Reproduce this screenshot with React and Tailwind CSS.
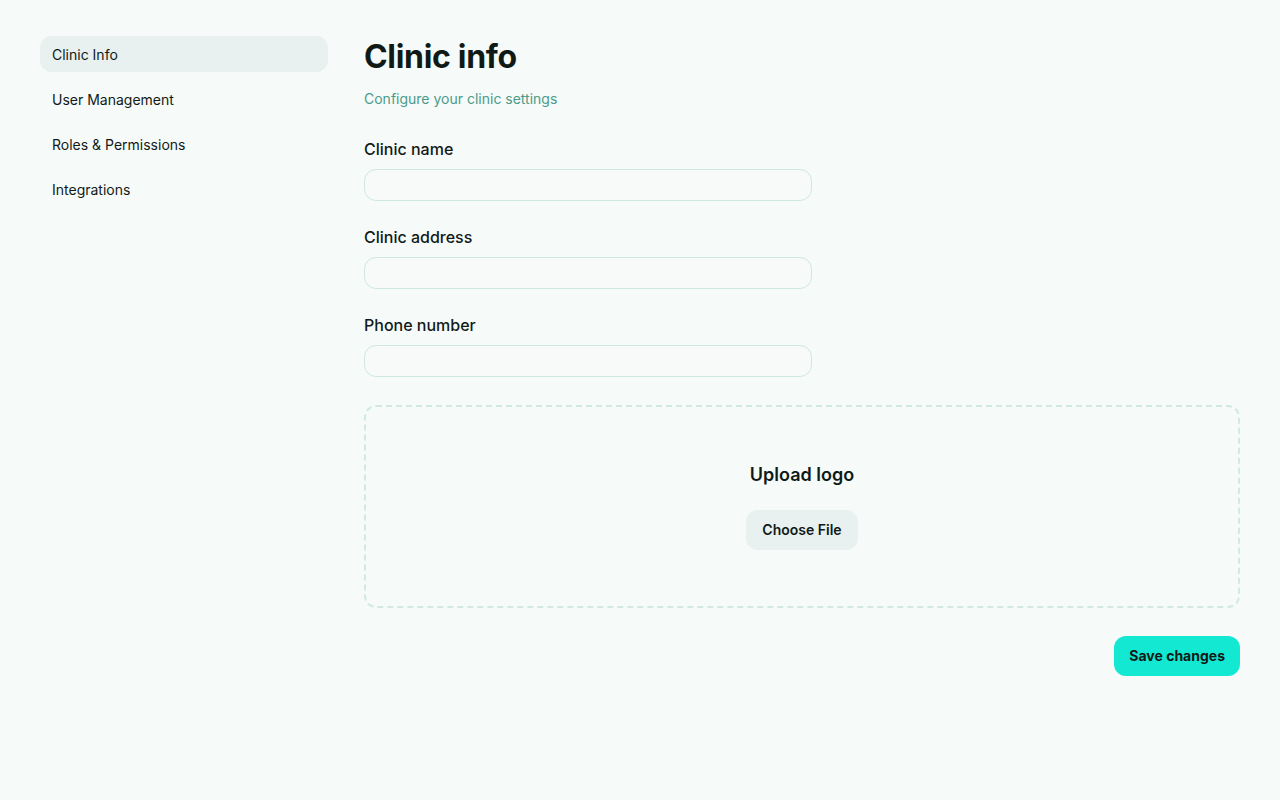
import React from "react";

const navItems = ["Clinic Info", "User Management", "Roles & Permissions", "Integrations"];

function Field({ label }) {
  return (
    <div className="flex flex-col">
      <label className="text-[16px] leading-6 font-medium text-[#111a18]">{label}</label>
      <input
        type="text"
        className="mt-2 h-8 w-[448px] rounded-xl border border-[#cfe7e1] bg-[#f7faf9] px-3 text-sm outline-none"
      />
    </div>
  );
}

export default function App() {
  return (
    <div
      className="min-h-[800px] w-full bg-[#f6faf9] text-[#111a18]"
      style={{ fontFamily: "Inter, 'Noto Sans', sans-serif" }}
    >
      <div className="flex gap-9 px-10 pt-9">
        <nav className="flex w-[288px] shrink-0 flex-col gap-[9px]">
          {navItems.map((item, i) => (
            <div
              key={item}
              className={
                "flex h-9 items-center rounded-xl px-3 pt-[2px] text-sm " +
                (i === 0 ? "bg-[#e8f0f0] text-[#111a18]" : "text-[#111a18]")
              }
            >
              {item}
            </div>
          ))}
        </nav>
        <main className="flex flex-1 flex-col pt-[1px]">
          <h1 className="text-[32px] leading-10 font-bold tracking-[-0.01em] text-[#0f1a17]">Clinic info</h1>
          <p className="mt-[12px] text-sm leading-5 text-[#4b9b8a]">Configure your clinic settings</p>
          <div className="mt-[28px] flex flex-col gap-6">
            <Field label="Clinic name" />
            <Field label="Clinic address" />
            <Field label="Phone number" />
          </div>
          <div className="mt-7 flex h-[203px] flex-col items-center justify-center rounded-xl border-2 border-dashed border-[#d2e9e3] pb-[3px]">
            <div className="text-lg leading-7 font-semibold text-[#0f1a17]">Upload logo</div>
            <button className="mt-[21px] h-10 rounded-xl bg-[#e8f0f0] px-4 text-sm font-semibold text-[#0f1a17]">
              Choose File
            </button>
          </div>
          <div className="mt-[28px] flex justify-end">
            <button className="h-10 rounded-xl bg-[#13e8d3] px-[15px] text-sm font-bold text-[#0f1a17]">
              Save changes
            </button>
          </div>
        </main>
      </div>
    </div>
  );
}
